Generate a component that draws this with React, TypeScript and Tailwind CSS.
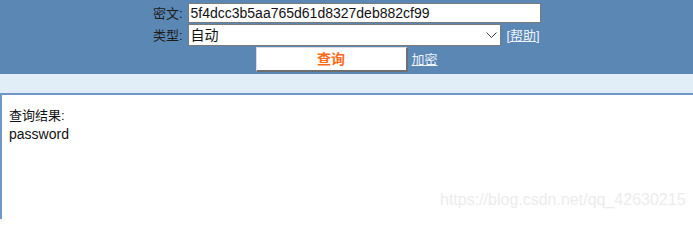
import React from 'react';

const font = { fontFamily: '"Liberation Sans", "Noto Sans CJK SC", sans-serif' };

const App: React.FC = () => {
  return (
    <div className="relative w-[693px] h-[219px] overflow-hidden bg-white text-[#111]" style={font}>
      <div className="h-[74px] bg-[#5b87b4] pt-[3px]">
        <div className="mx-auto w-[392px] flex flex-col">
          <div className="flex items-center h-[20px]">
            <span className="w-[37px] pr-[5px] text-right text-[13px] leading-none text-[#1c1c1c]">密文:</span>
            <div className="w-[353px] h-[20px] bg-white border border-[#7a7a7a] pl-[2px] flex items-center text-[14px] leading-none">
              5f4dcc3b5aa765d61d8327deb882cf99
            </div>
          </div>
          <div className="flex items-center h-[22px] mt-[1px]">
            <span className="w-[37px] pr-[5px] text-right text-[13px] leading-none text-[#1c1c1c]">类型:</span>
            <div className="w-[313px] h-[22px] bg-white border border-[#7a7a7a] pl-[2px] pr-[3px] flex items-center justify-between text-[14px] leading-none">
              <span>自动</span>
              <svg width="11" height="7" viewBox="0 0 11 7" className="text-[#444]">
                <polyline points="0.5,0.5 5.5,5.5 10.5,0.5" fill="none" stroke="currentColor" strokeWidth="1" />
              </svg>
            </div>
            <a className="ml-[6px] text-[13px] leading-none text-[#eef3fa] underline">[帮助]</a>
          </div>
          <div className="flex items-center justify-center h-[25px] mt-[1px]">
            <button className="w-[152px] h-[25px] bg-white border-t border-l border-t-[#dcdcdc] border-l-[#dcdcdc] border-r-2 border-b-2 border-r-[#6f6f6f] border-b-[#6f6f6f] text-[14px] font-bold text-[#ff6a1a] leading-none">
              查询
            </button>
            <a className="ml-[4px] w-[26px] text-[13px] leading-none text-[#eef3fa] underline">加密</a>
          </div>
        </div>
      </div>
      <div className="h-[19px] bg-[#e1edf7]" />
      <div className="h-[126px] border-t-2 border-l-2 border-[#6f98c6] pl-[7px] pt-[11px]">
        <div className="text-[13px] leading-[19px]">查询结果:</div>
        <div className="text-[14px] leading-[19px]">password</div>
      </div>
      <div className="absolute left-[440px] top-[190px] text-[16px] leading-[20px] text-[#ececec]">
        https://blog.csdn.net/qq_42630215
      </div>
    </div>
  );
};

export default App;
